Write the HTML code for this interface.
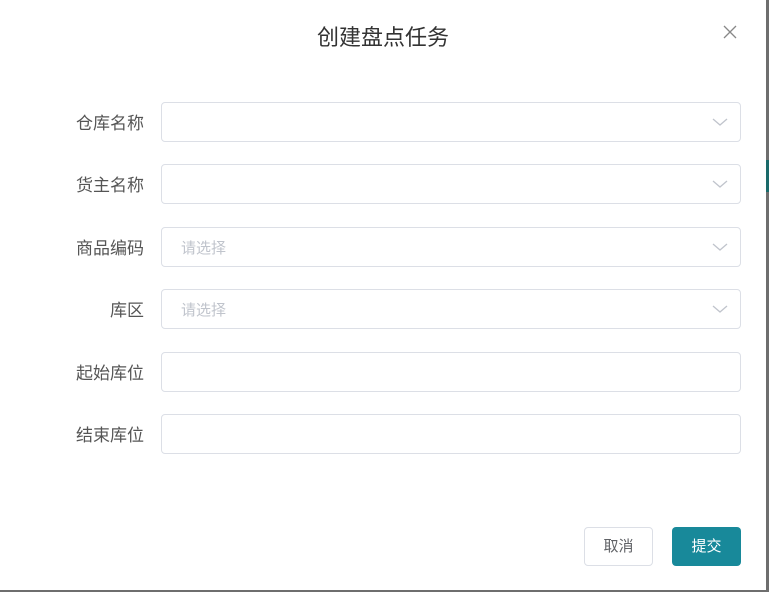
<!DOCTYPE html>
<html><head><meta charset="utf-8"><style>
body{margin:0;width:769px;height:592px;background:#6e6e6e;position:relative;overflow:hidden;font-family:"Liberation Sans","Noto Sans CJK SC",sans-serif}
.m{position:absolute;left:0;top:0;width:766px;height:590px;background:#fff}
.t{position:absolute;left:0;width:766px;top:20px;text-align:center;font-size:22px;color:#333}
.x{position:absolute;left:722px;top:24px}
.l{position:absolute;right:622px;font-size:17px;color:#555}
.i{position:absolute;left:161px;width:578px;height:38px;border:1px solid #dcdfe6;border-radius:4px;box-sizing:content-box}
.i span{position:absolute;left:19px;top:9px;font-size:15px;color:#c0c4cc}
.i svg{position:absolute;right:12px;top:14px}
.b{position:absolute;top:527px;width:67px;height:37px;border-radius:4px;font-size:15px;text-align:center;line-height:37px}
</style></head><body>
<div style="position:absolute;right:0;top:160px;width:3px;height:32px;background:#1a6a6a"></div>
<div class="m">
<div class="t">创建盘点任务</div>
<svg class="x" width="16" height="16" viewBox="0 0 16 16"><path d="M2 2L14 14M14 2L2 14" stroke="#888" stroke-width="1.3"/></svg>

<div class="l" style="top:109px">仓库名称</div>
<div class="i" style="top:102px"><svg width="16" height="10" viewBox="0 0 16 10"><path d="M1 2L8 8L15 2" fill="none" stroke="#c0c4cc" stroke-width="1.3"/></svg></div>
<div class="l" style="top:171px">货主名称</div>
<div class="i" style="top:164px"><svg width="16" height="10" viewBox="0 0 16 10"><path d="M1 2L8 8L15 2" fill="none" stroke="#c0c4cc" stroke-width="1.3"/></svg></div>
<div class="l" style="top:234px">商品编码</div>
<div class="i" style="top:227px"><span>请选择</span><svg width="16" height="10" viewBox="0 0 16 10"><path d="M1 2L8 8L15 2" fill="none" stroke="#c0c4cc" stroke-width="1.3"/></svg></div>
<div class="l" style="top:296px">库区</div>
<div class="i" style="top:289px"><span>请选择</span><svg width="16" height="10" viewBox="0 0 16 10"><path d="M1 2L8 8L15 2" fill="none" stroke="#c0c4cc" stroke-width="1.3"/></svg></div>
<div class="l" style="top:359px">起始库位</div>
<div class="i" style="top:352px"></div>
<div class="l" style="top:421px">结束库位</div>
<div class="i" style="top:414px"></div>

<div class="b" style="left:584px;border:1px solid #dcdfe6;color:#606266">取消</div>
<div class="b" style="left:672px;width:69px;height:39px;line-height:39px;background:#18899a;color:#fff">提交</div>
</div>
</body></html>
